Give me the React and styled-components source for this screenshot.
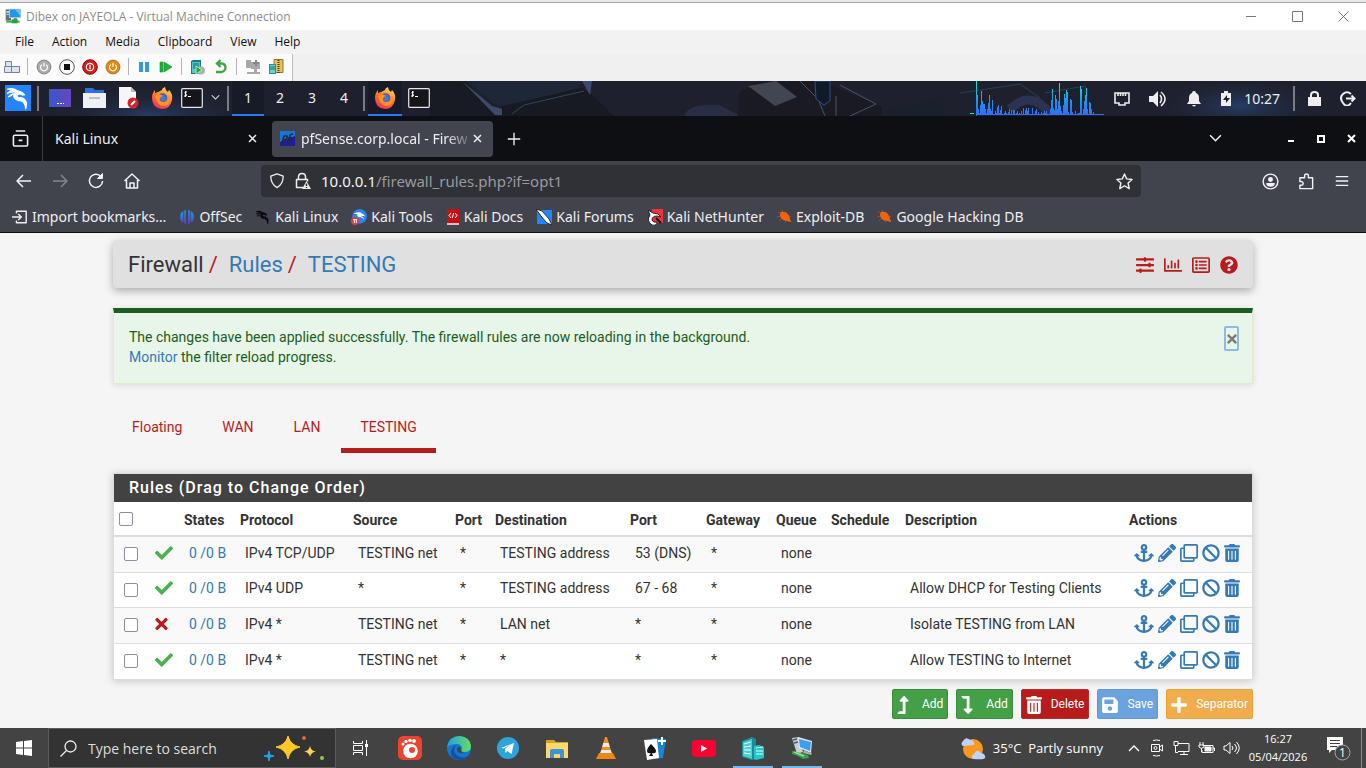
import React from "react";
import styled, { createGlobalStyle, css } from "styled-components";
import {
  FaAnchor,
  FaBan,
  FaCheck,
  FaLevelDownAlt,
  FaLevelUpAlt,
  FaPencilAlt,
  FaPlus,
  FaQuestionCircle,
  FaRegChartBar,
  FaRegClone,
  FaRegListAlt,
  FaSave,
  FaSlidersH,
  FaTimes,
  FaTrashAlt,
} from "react-icons/fa";

const GlobalStyle = createGlobalStyle`
  * {
    box-sizing: border-box;
  }
  body {
    margin: 0;
    background: #f5f5f5;
  }
  button, input {
    font: inherit;
    color: inherit;
  }
  button {
    padding: 0;
    border: 0;
    background: none;
  }
  a {
    color: inherit;
    text-decoration: none;
  }
  svg {
    display: block;
    flex: none;
  }
`;

const winFont = css`
  font-family: "Open Sans", "Noto Sans", sans-serif;
`;

const Screen = styled.div`
  display: flex;
  flex-direction: column;
  min-height: 100vh;
`;

/* ---------- virtual machine window ---------- */

const TitleBar = styled.header`
  ${winFont};
  display: flex;
  align-items: center;
  height: 30px;
  padding-left: 5px;
  border-top: 2px solid #e9e9e9;
  box-shadow: inset 0 1px #a5a5a5;
  background: #fff;
  color: #8c8c8c;
  font-size: 12px;
  gap: 5px;
`;

const WindowButtons = styled.div`
  display: flex;
  margin-left: auto;
`;

const WindowButton = styled.button`
  display: flex;
  align-items: center;
  justify-content: center;
  width: 46px;
  height: 26px;
  color: #777;
`;

const MenuBar = styled.nav`
  ${winFont};
  display: flex;
  align-items: center;
  height: 24px;
  padding: 0 0 2px 15px;
  gap: 18px;
  background: #f2f2f2;
  color: #111;
  font-size: 12px;
`;

const ToolStrip = styled.div`
  display: flex;
  height: 27px;
  background: #f0f0f0;
`;

const ToolGroup = styled.div`
  display: flex;
  align-items: center;
  padding: 0 8px 2px 4px;
  gap: 7px;
  background: #fbfbfb;
  border-right: 1px solid #bbb;
`;

const ToolDivider = styled.span`
  width: 2px;
  height: 17px;
  border-left: 1px solid #b5b5b5;
`;

/* ---------- kali panel ---------- */

const Panel = styled.div`
  position: relative;
  display: flex;
  align-items: center;
  height: 35px;
  background: #1e212d;
  color: #eee;
  font-family: "Noto Sans", sans-serif;
  font-size: 14px;
`;

const Wallpaper = styled.svg`
  position: absolute;
  inset: 0;
  width: 100%;
  height: 100%;
`;

const PanelGroup = styled.div`
  position: relative;
  display: flex;
  align-items: center;
  height: 100%;
  margin-left: ${(p) => (p.$end ? "auto" : 0)};
  gap: ${(p) => p.$gap || 0}px;
  padding: ${(p) => p.$pad || "0"};
`;

const PanelButton = styled.button`
  display: flex;
  align-items: center;
  justify-content: center;
  width: ${(p) => p.$width || 32}px;
  height: 100%;
  border-bottom: 2px solid ${(p) => (p.$active ? "#2777ff" : "transparent")};
  background: ${(p) => (p.$active ? "#171b27" : "none")};
`;

const PanelDivider = styled.span`
  width: 2px;
  height: 25px;
  margin: 0 ${(p) => p.$space || 0}px;
  background: #7b7d84;
`;

/* ---------- browser ---------- */

const TabStrip = styled.div`
  display: flex;
  align-items: center;
  height: 45px;
  background: #0e0f13;
  color: #eeeef0;
  font-family: "Noto Sans", sans-serif;
  font-size: 14px;
`;

const TabOverview = styled.button`
  display: flex;
  align-items: center;
  align-self: stretch;
  width: 43px;
  padding-left: 12px;
  border-right: 1px solid #3b3c42;
`;

const Tab = styled.div`
  display: flex;
  align-items: center;
  width: 221px;
  height: 36px;
  margin-left: 4px;
  padding: 0 11px 0 8px;
  gap: 6px;
  border-radius: 4px;
  background: ${(p) => (p.$active ? "#43454e" : "transparent")};
`;

const TabTitle = styled.span`
  flex: 1;
  white-space: nowrap;
  ${(p) =>
    p.$fade &&
    css`
      mask-image: linear-gradient(to right, #000 88%, transparent 104%);
    `}
`;

const TabClose = styled.button`
  display: flex;
`;

const IconButton = styled.button`
  display: flex;
  align-items: center;
  justify-content: center;
  width: ${(p) => p.$width || 36}px;
  height: 36px;
  color: ${(p) => (p.$dim ? "#84858b" : "#f2f2f4")};
`;

const NavBar = styled.div`
  display: flex;
  align-items: center;
  height: 40px;
  padding: 0 6px;
  background: #42444d;
`;

const UrlBox = styled.div`
  display: flex;
  align-items: center;
  flex: 1;
  height: 32px;
  margin: 0 111px;
  padding: 0 8px;
  gap: 9px;
  border-radius: 4px;
  background: #303136;
  color: #eee;
  font-family: "Noto Sans", sans-serif;
  font-size: 15px;
`;

const UrlText = styled.span`
  flex: 1;
  color: #9a9a9e;
  b {
    color: #f4f4f4;
    font-weight: 400;
  }
`;

const Bookmarks = styled.nav`
  display: flex;
  align-items: center;
  height: 32px;
  padding: 0 12px;
  gap: 13px;
  border-bottom: 1px solid #0e0f13;
  background: #42444d;
  color: #eeeef0;
  font-family: "Noto Sans", sans-serif;
  font-size: 14px;
`;

const Bookmark = styled.a`
  display: flex;
  align-items: center;
  gap: 4px;
  white-space: nowrap;
`;

/* ---------- firewall page ---------- */

const Page = styled.main`
  flex: 1;
  width: 100%;
  max-width: 1140px;
  margin: 0 auto;
  padding: 7px 0 9px;
  color: #333;
  font-family: Roboto, sans-serif;
  font-size: 14px;
  line-height: 20px;
`;

const PageHeader = styled.div`
  display: flex;
  align-items: center;
  height: 48px;
  padding: 2px 15px 0;
  border-radius: 4px;
  background: #e0e0e0;
  box-shadow: 0 3px 8px rgba(0, 0, 0, 0.3);
`;

const Breadcrumb = styled.h1`
  display: flex;
  margin: 0;
  gap: 5px;
  font-size: 22px;
  font-weight: 400;
  a {
    margin-left: 6px;
    color: #337ab7;
  }
  i {
    color: #c4161c;
    font-style: normal;
  }
`;

const HeaderLinks = styled.div`
  display: flex;
  margin-left: auto;
  gap: 10px;
  color: #b71c1c;
`;

const Alert = styled.div`
  display: flex;
  justify-content: space-between;
  align-items: flex-start;
  margin-top: 20px;
  padding: 13px 13px 16px 15px;
  border: 1px solid #dcedc8;
  border-top: 5px solid #1b5e20;
  background: #e8f5e9;
  color: #1b5e20;
  box-shadow: 0 1px 6px rgba(0, 0, 0, 0.12);
  p {
    margin: 1px 0 0;
  }
  a {
    color: #337ab7;
  }
`;

const AlertClose = styled.button`
  display: flex;
  align-items: center;
  justify-content: center;
  width: 15px;
  height: 25px;
  border: 2px solid #8db8e8;
  border-radius: 2px;
  color: #777f78;
`;

const TabList = styled.nav`
  display: flex;
  gap: 2px;
  margin-top: 23px;
`;

const TabLink = styled.a`
  height: 46px;
  padding: 10px 19px 0;
  border-bottom: 5px solid ${(p) => (p.$active ? "#b71c1c" : "transparent")};
  color: #b71c1c;
`;

const RulesPanel = styled.section`
  margin-top: 20px;
  border: 1px solid #ddd;
  background: #fff;
  box-shadow: 0 1px 8px rgba(0, 0, 0, 0.2);
`;

const RulesTitle = styled.h2`
  margin: 0;
  padding: 4px 15px;
  background: #424242;
  color: #fff;
  font-size: 16px;
  font-weight: 500;
  letter-spacing: 1px;
`;

const RulesTable = styled.table`
  width: 100%;
  table-layout: fixed;
  border-collapse: separate;
  border-spacing: 0;
`;

const Th = styled.th`
  width: ${(p) => (p.$width ? `${p.$width}px` : "auto")};
  height: 35px;
  padding: 2px 5px 0;
  border-bottom: 2px solid #ddd;
  font-weight: 700;
  text-align: left;
  white-space: nowrap;
`;

const Row = styled.tr`
  height: 35px;
  &:nth-child(odd) {
    height: 36px;
    background: #f9f9f9;
  }
  &:not(:last-child) td {
    border-bottom: 1px solid #ddd;
  }
`;

const Td = styled.td`
  padding: 0 0 4px 10px;
  white-space: nowrap;
  a {
    color: #337ab7;
  }
`;

const Tick = styled.input.attrs({ type: "checkbox" })`
  display: block;
  appearance: none;
  width: 14px;
  height: 14px;
  margin: ${(p) => (p.$head ? "0 0 2px" : "3px 0 0")};
  border: 1px solid #8f8f9d;
  border-radius: 2px;
  background: #fff;
`;

const Actions = styled.div`
  display: flex;
  gap: 4px;
`;

const AnchorIcon = styled(FaAnchor)`
  width: 20px;
`;

const TrashIcon = styled(FaTrashAlt)`
  width: 16px;
`;

const BlockIcon = styled(FaTimes)`
  width: 13px;
`;

const UpIcon = styled(FaLevelUpAlt)`
  width: 12px;
`;

const DownIcon = styled(FaLevelDownAlt)`
  width: 12px;
`;

const SaveIcon = styled(FaSave)`
  width: 16px;
`;

const PlusIcon = styled(FaPlus)`
  width: 16px;
`;

const ButtonRow = styled.div`
  display: flex;
  justify-content: flex-end;
  margin-top: 9px;
  gap: 8px;
`;

const tones = {
  green: ["#43a047", "#388e3c"],
  red: ["#b71c1c", "#c62828"],
  blue: ["#6ba3df", "#5c98d6"],
  orange: ["#f0ad4e", "#eea236"],
};

const ActionButton = styled.button`
  display: flex;
  align-items: center;
  height: 30px;
  padding: 0 4px;
  gap: 9px;
  border: 1px solid ${(p) => tones[p.$tone][1]};
  border-radius: 2px;
  background: ${(p) => tones[p.$tone][0]};
  color: #fff;
  font-size: 12px;
`;

const ButtonIcon = styled.span`
  width: 16px;
  padding-top: 2px;
`;

/* ---------- windows taskbar ---------- */

const TaskBar = styled.footer`
  ${winFont};
  display: flex;
  align-items: stretch;
  height: 40px;
  background: #434343;
  color: #fff;
  font-size: 13px;
`;

const StartButton = styled.button`
  display: flex;
  align-items: center;
  justify-content: center;
  width: 48px;
`;

const SearchBox = styled.label`
  display: flex;
  align-items: center;
  width: 288px;
  padding: 0 9px 0 11px;
  gap: 11px;
  border: 1px solid #5c5c5c;
  background: #333;
  input {
    flex: 1;
    min-width: 0;
    padding: 0;
    border: 0;
    background: none;
    font-size: 14px;
    &::placeholder {
      color: #ddd;
      opacity: 1;
    }
  }
`;

const TaskButton = styled.button`
  display: flex;
  align-items: center;
  justify-content: center;
  width: 49px;
  background: ${(p) => (p.$open ? "linear-gradient(#76b9ed, #76b9ed) bottom / 40px 2px no-repeat" : "none")};
`;

const TaskList = styled.div`
  display: flex;
`;

const Tray = styled.div`
  display: flex;
  align-items: center;
  margin-left: auto;
  gap: 8px;
`;

const Weather = styled.button`
  display: flex;
  align-items: center;
  margin-right: 17px;
  gap: 7px;
  white-space: pre;
`;

const Clock = styled.div`
  width: 60px;
  margin-right: 11px;
  font-size: 11px;
  line-height: 18px;
  text-align: center;
`;

const DesktopEdge = styled.span`
  width: 5px;
  height: 100%;
  margin-left: 2px;
  border-left: 1px solid #8a8a8a;
`;

const PcIcon = ({ size = 18 }) => (
  <svg width={size} height={size} viewBox="0 0 24 24">
    <path d="M1 2h8v17H1z" fill="#687177" />
    <path d="M2 5h5v2H2zm0 4h5v1H2z" fill="#e7eef1" />
    <path d="M6 1h18v14H6z" fill="#d3dadd" />
    <path d="M7 2h16v12H7z" fill="#2197e9" />
    <path d="M15 2h8v10z" fill="#6ac3fb" />
    <path d="M13 15h5v4h-5z" fill="#878d8e" />
    <path d="M2 19h20v3H2z" fill="#34b54a" />
    <path d="M10 17h9v6h-9z" fill="#26a33c" />
  </svg>
);

const VmTaskIcon = () => (
  <svg width="24" height="24" viewBox="0 0 24 24">
    <path d="M2 2l7-1 4 15-6 2z" fill="#c9ced1" />
    <path d="M3 4l4-1M4 7l4-1" stroke="#555" strokeWidth="1.500" />
    <path d="M8 1l14 4-1 12L9 12z" fill="#dfe8ee" />
    <path d="M9 3l12 3-1 9-10-4z" fill="#3a9fee" />
    <path d="M14 14l4 2 4 1-1 2-8-2z" fill="#a7adb0" />
    <path d="M2 15l9 2 7 2 1 3-6 1-5-3-6-2z" fill="#37a349" />
    <path d="M4 16l10 4" stroke="#9cdc91" strokeWidth="1.500" />
  </svg>
);

const PowerDot = ({ fill }) => (
  <svg width="16" height="16" viewBox="0 0 16 16">
    <circle cx="8" cy="8" r="7" fill={fill} stroke="#00000055" />
    <path d="M5.8 5.6a3.5 3.5 0 1 0 4.4 0M8 3.8v4" fill="none" stroke="#fff" strokeWidth="1.2" />
  </svg>
);

const Server = () => (
  <g>
    <path d="M1 2l2-1h8v14H1z" fill="#167b87" />
    <path d="M2 3h8v11H2z" fill="#54c6cc" />
    <path d="M3 5h6M3 7h6M3 9h6" stroke="#126b76" />
  </g>
);

const ToolIcons = () => (
  <>
    <svg width="16" height="16" viewBox="0 0 16 16" fill="#dce5ef" stroke="#74839b">
      <path d="M1.500 2.500h6v5h-6zM.5 7.500h7v6h-7zM7.500 7.500h8v6h-8z" />
    </svg>
    <ToolDivider />
    <PowerDot fill="#ababab" />
    <svg width="16" height="16" viewBox="0 0 16 16">
      <circle cx="8" cy="8" r="7.3" fill="#fff" stroke="#555" />
      <path d="M5 5h6v6H5z" fill="#111" />
    </svg>
    <svg width="16" height="16" viewBox="0 0 16 16">
      <circle cx="8" cy="8" r="7.3" fill="#dc1717" stroke="#8f0909" />
      <circle cx="8" cy="8" r="3.7" fill="none" stroke="#fff" strokeWidth="1.2" />
      <path d="M8 5.8v4.4" stroke="#fff" strokeWidth="1.3" />
    </svg>
    <PowerDot fill="#e78a0b" />
    <ToolDivider />
    <svg width="13" height="16" viewBox="0 0 13 16">
      <path d="M2 3h4v10H2zM8 3h4v10H8z" fill="#3598e7" />
    </svg>
    <svg width="17" height="16" viewBox="0 0 17 16">
      <path d="M3 3h3v10H3zM7 3l8 5-8 5z" fill="#20b33c" stroke="#148c2a" strokeWidth=".6" />
    </svg>
    <ToolDivider />
    <svg width="16" height="16" viewBox="0 0 16 16">
      <Server />
      <circle cx="11" cy="11.5" r="4" fill="#aab1b3" />
      <path d="M6 7l6 4-6 4z" fill="#1ead3a" stroke="#fff" strokeWidth=".6" />
    </svg>
    <svg width="16" height="16" viewBox="0 0 16 16" fill="none" stroke="#3fa640" strokeWidth="2.3">
      <path d="M3 13h5.500q4-1 4-4.500t-4-4H4M7.500 1L4 4.500 7.500 8" />
    </svg>
    <ToolDivider />
    <svg width="16" height="16" viewBox="0 0 16 16" fill="#a9a9a9">
      <path d="M1 1h5v8H1zM6 3h9v7H6zM9 10h3v3h3v2H2v-2h7z" />
      <path d="M11 1v6M8 4h6" stroke="#888" strokeWidth="2" />
    </svg>
    <svg width="16" height="16" viewBox="0 0 16 16">
      <path d="M6 .500h9v13H6z" fill="#e7c05a" stroke="#9b7823" />
      <path d="M10.500 1v13" stroke="#333" strokeWidth="2" strokeDasharray="1 1" />
      <path d="M1 5h7v10H1z" fill="#23939d" />
      <path d="M2 6h5v8H2z" fill="#67d2d5" />
      <path d="M2 8h5M2 10h5" stroke="#137581" />
    </svg>
  </>
);

const dragon =
  "M2 4q5-2 9 1l3 1q3 1 4 3l-2 .3q-1-1-3-1-3 1-1 3 5 0 7 3 2 3 0 8 0-6-4-7.500-6-.5-7-4 0-3 3-4-4-1-9 1 3-3 6-3-3-.5-6-.8zM3 11q3-3 5-3-2 2-5 3z";

const KaliLogo = ({ size = 26, bg = "#2385ff", color = "#fff" }) => (
  <svg width={size} height={size} viewBox="0 0 24 24">
    <path d="M0 0h24v24H0z" fill={bg} />
    <path d={dragon} fill={color} stroke={color} strokeWidth="1" />
  </svg>
);

const Firefox = () => (
  <svg width="22" height="22" viewBox="0 0 22 22">
    <defs>
      <linearGradient id="fox" x1=".8" y1="0" x2=".3" y2="1">
        <stop offset="0" stopColor="#ffe34a" />
        <stop offset=".5" stopColor="#ff7b24" />
        <stop offset="1" stopColor="#f02d62" />
      </linearGradient>
    </defs>
    <path d="M11 3q0-2 3-3 0 3 3 5l1-2q4 4 3 10-2 9-10 9Q1 21 1 11 1 6 4 3v3l3-1z" fill="url(#fox)" />
    <circle cx="11.500" cy="11" r="4.800" fill="#5a55cd" />
    <path d="M4 9q3-3 6-1l3 1-4 2q-1 4 4 4 5-1 4-7 4 6-1 10-9 4-12-9z" fill="#ff951e" />
    <circle cx="12" cy="11.500" r="2.600" fill="#3b7fd8" />
  </svg>
);

const Terminal = () => (
  <svg width="22" height="20" viewBox="0 0 22 20">
    <rect x=".7" y=".7" width="20.600" height="18.600" rx="1" fill="#14161a" stroke="#e8e8e8" strokeWidth="1.200" />
    <path d="M6 4H4.500q-1.500 1 0 1.800 2 .8.500 2.200H3M4.600 3v6M7 8.500h3" fill="none" stroke="#fff" />
  </svg>
);

const bars = [
  46, 20, 6, 2, 10, 24, 14, 11, 11, 6, 2, 6, 12, 20, 6, 4, 15, 1, 1, 4, 2, 8, 10, 2, 5, 9, 1, 1, 2, 4, 2, 1, 3, 6, 1,
  5, 1, 5, 5, 1, 2, 4, 1, 2, 1, 4, 1, 7, 1, 5, 7, 4, 7, 1, 1, 1, 7, 1, 1, 4, 6, 1, 3, 1, 1, 3, 1, 2, 4, 2, 4, 1, 1, 1,
  6, 15, 26, 7, 5, 20, 16, 6, 14, 32, 9, 4, 2, 10, 21, 17, 25, 23, 3, 1, 16, 15, 3, 1, 1, 4, 1, 1, 2, 2, 29, 26, 1, 6,
  14, 20, 27, 6, 1, 13, 12, 6, 1, 3, 1, 1,
];

const CpuGraph = () => (
  <svg width="134" height="35" viewBox="0 0 134 35">
    <defs>
      <linearGradient id="cpu" gradientUnits="userSpaceOnUse" x1="0" y1="0" x2="0" y2="34">
        <stop offset="0" stopColor="#14edda" />
        <stop offset=".65" stopColor="#1d8eef" />
        <stop offset="1" stopColor="#336dfb" />
      </linearGradient>
    </defs>
    <path d="M0 32h4v1H0z" fill="#13e5bd" />
    <g fill="url(#cpu)">
      {bars.map((h, i) => (
        <rect key={i} x={6 + i} y={34 - Math.min(h, 34)} width="1" height={h} />
      ))}
      <path d="M6 33h128v1H6z" />
    </g>
  </svg>
);

const Chevron = ({ size = 12, up }) => (
  <svg width={size} height={size} viewBox="0 0 12 12" fill="none" stroke="currentColor" strokeWidth="1.400">
    <path d={up ? "M1 9l5-5 5 5" : "M1 3l5 5 5-5"} />
  </svg>
);

const Cross = ({ size = 9 }) => (
  <svg width={size} height={size} viewBox="0 0 9 9" stroke="currentColor" strokeWidth="1.500">
    <path d="M1 1l7 7M8 1L1 8" />
  </svg>
);

const Line = ({ size = 18, width = 1.5, children }) => (
  <svg
    width={size}
    height={size}
    viewBox="0 0 18 18"
    fill="none"
    stroke="currentColor"
    strokeWidth={width}
    strokeLinejoin="round"
  >
    {children}
  </svg>
);

const ImportIcon = () => (
  <Line size={16} width={1.6}>
    <path d="M5 5V2.500h11v13H5V13M0 9h10M7 5.500L10.500 9 7 12.500" />
  </Line>
);

const OffsecIcon = () => (
  <svg width="16" height="16" viewBox="0 0 16 16">
    <defs>
      <linearGradient id="offsec" gradientUnits="userSpaceOnUse" x1="0" y1="0" x2="0" y2="16">
        <stop offset="0" stopColor="#13a4cf" />
        <stop offset="1" stopColor="#6336da" />
      </linearGradient>
    </defs>
    <g fill="url(#offsec)">
      <path d="M6.900 1v14.500l-1.700-1.500V1.500zM9.100 1v14.500l1.700-1.500V1.500z" />
      <path d="M4.400 2v11.500Q1 12.500 1 8t3.400-6zM11.600 2v11.500Q15 12.500 15 8t-3.400-6z" />
    </g>
  </svg>
);

const ToolsIcon = () => (
  <svg width="16" height="16" viewBox="0 0 24 24">
    <circle cx="13" cy="11" r="11" fill="#2b83f4" />
    <path d="M4 7q8-4 13 0 3 1 4 4l-6-1q4 2 5 7-3-5-8-5-4-1-2-4-3-1-6-1z" fill="#fff" />
    <circle cx="6" cy="18" r="6" fill="#e63b3d" />
    <path d="M3 16h6M5 16v5M8 16v5" stroke="#fff" strokeWidth="1.500" />
  </svg>
);

const DocsIcon = () => (
  <svg width="14" height="16" viewBox="0 0 14 16">
    <path d="M1 0h12v16H1z" fill="#c90e14" />
    <path d="M1 14h12v2H1z" fill="#e6bcbc" />
    <path d="M5 4L3 6.500 5 9M9 4l2 2.500L9 9M7.600 4l-1.200 5" fill="none" stroke="#fff" />
  </svg>
);

const ForumsIcon = () => (
  <svg width="16" height="16" viewBox="0 0 16 16">
    <path d="M1 1h15v14H1z" fill="#2384f5" />
    <path d="M0 0l6 2 7 8 3 6-5-2-6-7z" fill="#fff" stroke="#101318" strokeWidth=".8" />
  </svg>
);

const HunterIcon = () => (
  <svg width="16" height="16" viewBox="0 0 16 16">
    <path d="M5 0h11v14H6z" fill="#ef333c" />
    <path d="M1 1l5 3 5 1 3 3-4-1q-5 0-5 4 1 3 5 2 0 4-5 3-6-4-2-10z" fill="#fff" stroke="#17171a" strokeWidth=".9" />
    <path d="M9 9l5 5" stroke="#17171a" strokeWidth="2" />
  </svg>
);

const ExploitIcon = () => (
  <svg width="15" height="15" viewBox="0 0 15 15" fill="#f0640f" stroke="#a4572a" strokeWidth=".8">
    <path d="M1 3l4 1M5 1l1 3M0 8l4-1M2 12l3-3M8 14l1-2M14 13l-2-3M14 7l-2 1" />
    <path d="M4 3q3-1 6 1 3 3 3 6l1 3-4-1q-4 0-6-3-2-3 0-6z" stroke="none" />
  </svg>
);

const bookmarks = [
  ["Import bookmarks…", ImportIcon],
  ["OffSec", OffsecIcon],
  ["Kali Linux", () => <KaliLogo size={16} bg="none" color="#09090b" />],
  ["Kali Tools", ToolsIcon],
  ["Kali Docs", DocsIcon],
  ["Kali Forums", ForumsIcon],
  ["Kali NetHunter", HunterIcon],
  ["Exploit-DB", ExploitIcon],
  ["Google Hacking DB", ExploitIcon],
];

const columns = [
  ["States", 56],
  ["Protocol", 113],
  ["Source", 102],
  ["Port", 40],
  ["Destination", 135],
  ["Port", 76],
  ["Gateway", 70],
  ["Queue", 55],
  ["Schedule", 74],
  ["Description", null],
  ["Actions", 128],
];

const rules = [
  { pass: true, cells: ["IPv4 TCP/UDP", "TESTING net", "*", "TESTING address", "53 (DNS)", "*", "none", "", ""] },
  {
    pass: true,
    cells: ["IPv4 UDP", "*", "*", "TESTING address", "67 - 68", "*", "none", "", "Allow DHCP for Testing Clients"],
  },
  { pass: false, cells: ["IPv4 *", "TESTING net", "*", "LAN net", "*", "*", "none", "", "Isolate TESTING from LAN"] },
  { pass: true, cells: ["IPv4 *", "TESTING net", "*", "*", "*", "*", "none", "", "Allow TESTING to Internet"] },
];

const actionIcons = [
  ["Anchor", AnchorIcon],
  ["Edit", FaPencilAlt],
  ["Copy", FaRegClone],
  ["Disable", FaBan],
  ["Remove", TrashIcon],
];

const pageButtons = [
  ["Add", "green", UpIcon],
  ["Add", "green", DownIcon],
  ["Delete", "red", TrashIcon],
  ["Save", "blue", SaveIcon],
  ["Separator", "orange", PlusIcon],
];

function VmWindow() {
  return (
    <>
      <TitleBar>
        <PcIcon size={16} />
        Dibex on JAYEOLA - Virtual Machine Connection
        <WindowButtons>
          <WindowButton aria-label="Minimize">
            <svg width="11" height="11" stroke="currentColor">
              <path d="M0 5.500h10" />
            </svg>
          </WindowButton>
          <WindowButton aria-label="Maximize">
            <svg width="11" height="11" fill="none" stroke="currentColor">
              <path d="M.5.500h10v10H.500z" />
            </svg>
          </WindowButton>
          <WindowButton aria-label="Close">
            <svg width="11" height="11" stroke="currentColor">
              <path d="M.5.500l10 10M10.500.500l-10 10" />
            </svg>
          </WindowButton>
        </WindowButtons>
      </TitleBar>
      <MenuBar>
        {["File", "Action", "Media", "Clipboard", "View", "Help"].map((item) => (
          <button key={item}>{item}</button>
        ))}
      </MenuBar>
      <ToolStrip>
        <ToolGroup>
          <ToolIcons />
        </ToolGroup>
      </ToolStrip>
    </>
  );
}

function KaliPanel() {
  return (
    <Panel>
      <Wallpaper viewBox="0 0 1366 35" preserveAspectRatio="none" aria-hidden="true">
        <defs>
          <radialGradient id="haze">
            <stop offset="0" stopColor="#263c66" />
            <stop offset="1" stopColor="#1e212d" stopOpacity="0" />
          </radialGradient>
        </defs>
        <ellipse cx="150" cy="35" rx="110" ry="30" fill="url(#haze)" />
        <ellipse cx="1240" cy="25" rx="90" ry="30" fill="url(#haze)" />
        <path d="M430 0h36l30 35h-66z" fill="#191b24" />
        <path d="M462 0l30 25 10 3v6h-7z" fill="#3d4c66" />
        <path d="M466 0h116l-4 7-70 18-12-1z" fill="#1e2738" />
        <path d="M502 25l80-18 14 10 18 18H502z" fill="#181a22" />
        <path d="M512 33l12-9 60-14" fill="none" stroke="#2f465e" />
        <path d="M582 0h10l-2 14z" fill="#3a4a74" />
        <path d="M684 35q5-13 35-11l22 11z" fill="#292e46" />
        <path d="M739 12l20-12h60l35 14 28 12v9H738z" fill="#1a1b22" />
        <path d="M748 5l28-5 21 16-22 9z" fill="#414651" />
        <path d="M800 0l18 18 7 17M850 35l26-12-36-19M836 15v20" fill="none" stroke="#46536a" />
        <path d="M815 0h15v20l-6 4-8-6z" fill="#111a2b" stroke="#324d86" />
        <path d="M885 28l60-12v19h-62z" fill="#1b202d" />
        <path d="M1010 28q22-20 40 5" fill="none" stroke="#2c3350" strokeWidth="9" />
        <path d="M960 12l60-9 20 14M1045 12l40-7v20" fill="none" stroke="#234454" />
      </Wallpaper>
      <PanelGroup $pad="0 0 0 2px">
        <PanelButton aria-label="Applications">
          <KaliLogo />
        </PanelButton>
        <PanelDivider $space={3} />
        <PanelButton $width={36} aria-label="Desktop">
          <svg width="22" height="18">
            <defs>
              <linearGradient id="desk">
                <stop stopColor="#3657cd" />
                <stop offset="1" stopColor="#6946bd" />
              </linearGradient>
            </defs>
            <path d="M0 0h22v18H0z" fill="url(#desk)" />
            <path d="M8 14h2v1H8zM11 14h2v1h-2zM14 14h1v1h-1z" fill="#fff" />
          </svg>
        </PanelButton>
        <PanelButton aria-label="Files">
          <svg width="23" height="20">
            <path d="M2 0h8l2 2h9v5H2z" fill="#2c6ee8" />
            <path d="M0 5h23v15H0z" fill="#eef0f3" />
            <path d="M6 9h11v2H6z" fill="#bdc1c7" />
          </svg>
        </PanelButton>
        <PanelButton $width={36} aria-label="Text editor">
          <svg width="21" height="22">
            <path d="M1 0h12l5 5v16H1z" fill="#f6f6f6" />
            <path d="M13 0l5 5h-5z" fill="#bbb" />
            <circle cx="15" cy="16" r="5.500" fill="#d6202c" />
            <path d="M13 18l4-4" stroke="#fff" strokeWidth="2" />
          </svg>
        </PanelButton>
        <PanelButton aria-label="Firefox">
          <Firefox />
        </PanelButton>
        <PanelButton $width={28} aria-label="Terminal">
          <Terminal />
        </PanelButton>
        <PanelButton $width={18} aria-label="More terminals">
          <Chevron size={9} />
        </PanelButton>
        <PanelDivider $space={3} />
        <PanelButton $active>1</PanelButton>
        <PanelButton>2</PanelButton>
        <PanelButton>3</PanelButton>
        <PanelButton>4</PanelButton>
        <PanelDivider $space={3} />
        <PanelButton $active $width={34} aria-label="Firefox window">
          <Firefox />
        </PanelButton>
        <PanelButton $width={34} aria-label="Terminal window">
          <Terminal />
        </PanelButton>
      </PanelGroup>
      <PanelGroup $end $pad="0 10px 0 0" $gap={19}>
        <PanelGroup $gap={10}>
          <CpuGraph />
          <svg width="16" height="14" viewBox="0 0 16 14" fill="none" stroke="#eee" strokeWidth="1.600">
            <path d="M1 1h14v10h-4v2H5v-2H1zM4 1v3M6.500 1v3M9 1v3M11.500 1v3" />
          </svg>
        </PanelGroup>
        <svg width="18" height="16" viewBox="0 0 18 16" fill="#eee">
          <path d="M0 5h4l5-5v16l-5-5H0z" />
          <path d="M11 4q3 4 0 8M12 1q8 7 0 14" fill="none" stroke="#eee" strokeWidth="1.600" />
        </svg>
        <svg width="16" height="16" viewBox="0 0 16 16" fill="#eee">
          <path d="M6 2q0-2 2-2t2 2q3 1 3 5v3l2 3H1l2-3V7q0-4 3-5zM6 14h4q-2 3-4 0z" />
        </svg>
        <PanelGroup $gap={13}>
          <svg width="10" height="15" viewBox="0 0 10 15">
            <path d="M0 2h3V0h4v2h3v13H0z" fill="#eee" />
            <path d="M6 4L2 9h3v3l4-5H6z" fill="#1e212d" />
          </svg>
          <span>10:27</span>
          <PanelDivider />
          <svg width="13" height="15" viewBox="0 0 13 15">
            <path d="M0 6h13v9H0z" fill="#eee" />
            <path d="M3 7V4q0-3 3.500-3T10 4v3" fill="none" stroke="#eee" strokeWidth="2" />
          </svg>
        </PanelGroup>
        <svg width="16" height="15" viewBox="0 0 16 15" fill="none" stroke="#eee" strokeWidth="2">
          <path d="M11 3Q7-.5 3 3T3 12t8 0M6 7.500h8M11.500 4.500l3 3-3 3" />
        </svg>
      </PanelGroup>
    </Panel>
  );
}

function Browser() {
  return (
    <>
      <TabStrip>
        <TabOverview aria-label="Recent browsing">
          <Line size={17} width={1.7}>
            <path d="M4 1h10M3 5.500h12q1.500 0 1.500 1.500v8.500q0 1.500-1.500 1.500H3q-1.500 0-1.500-1.500V7Q1.500 5.500 3 5.500zM7 11h4" />
          </Line>
        </TabOverview>
        <Tab>
          <TabTitle>Kali Linux</TabTitle>
          <TabClose aria-label="Close tab">
            <Cross />
          </TabClose>
        </Tab>
        <Tab $active>
          <svg width="15" height="15" viewBox="0 0 15 15">
            <path d="M0 0h15v15H0z" fill="#211d94" />
            <path d="M0 0h15v5L0 11z" fill="#1478d0" />
            <path d="M2 12l2-7h3q1 3-3 4M8 12l2-7q0-2 3-2M8 7h4" fill="none" stroke="#24274b" strokeWidth="1.600" />
          </svg>
          <TabTitle $fade>pfSense.corp.local - Firew</TabTitle>
          <TabClose aria-label="Close tab">
            <Cross />
          </TabClose>
        </Tab>
        <IconButton $width={42} aria-label="New tab">
          <Line size={16}>
            <path d="M9 2v14M2 9h14" />
          </Line>
        </IconButton>
        <PanelGroup $end>
          <IconButton aria-label="List tabs">
            <Chevron size={13} />
          </IconButton>
          <PanelGroup $gap={22} $pad="0 10px 0 54px">
            <svg width="8" height="9">
              <path d="M1 6h6v2H1z" fill="#fff" />
            </svg>
            <svg width="8" height="8">
              <path d="M1 1h6v6H1z" fill="none" stroke="#fff" strokeWidth="2" />
            </svg>
            <svg width="9" height="9" stroke="#fff" strokeWidth="2">
              <path d="M1 1l7 7M8 1L1 8" />
            </svg>
          </PanelGroup>
        </PanelGroup>
      </TabStrip>
      <NavBar>
        <IconButton aria-label="Back">
          <Line>
            <path d="M16 9H2M8 3L2 9l6 6" />
          </Line>
        </IconButton>
        <IconButton $dim aria-label="Forward">
          <Line>
            <path d="M2 9h14M10 3l6 6-6 6" />
          </Line>
        </IconButton>
        <IconButton aria-label="Reload">
          <Line>
            <path d="M14 4.500A6.600 6.600 0 1 0 15.600 9" />
            <path d="M15.500 1.500v5h-5z" fill="currentColor" strokeWidth="1" />
          </Line>
        </IconButton>
        <IconButton aria-label="Home">
          <Line>
            <path d="M1.500 9L9 2l7.500 7M3.500 8v8h11V8M7 16v-5h4v5" />
          </Line>
        </IconButton>
        <UrlBox>
          <Line size={16}>
            <path d="M9 1l7 2.500q0 9-7 13-7-4-7-13z" />
          </Line>
          <Line size={18}>
            <path d="M9 15.500H2.500V7.500h11v2M4.500 7.500V5q0-3.500 3.500-3.500T11.500 5v2.500" />
            <path d="M12.500 9l4.500 8H8z" fill="currentColor" stroke="none" />
            <path d="M12.500 11.500v2.500M12.500 15v1" stroke="#303136" />
          </Line>
          <UrlText>
            <b>10.0.0.1</b>/firewall_rules.php?if=opt1
          </UrlText>
          <Line size={17}>
            <path d="M9 1l2.300 5.200 5.700.6-4.200 3.800 1.200 5.900L9 13.500l-5 3 1.200-5.900L1 6.800l5.700-.6z" />
          </Line>
        </UrlBox>
        <IconButton aria-label="Account">
          <Line size={17}>
            <circle cx="9" cy="9" r="7.800" />
            <circle cx="9" cy="6.800" r="2.600" fill="currentColor" stroke="none" />
            <path d="M4.500 10.500h9q0 4-4.500 4t-4.500-4z" fill="currentColor" stroke="none" />
          </Line>
        </IconButton>
        <IconButton aria-label="Extensions">
          <Line size={17}>
            <path d="M2 5h5V3q0-2 2-2t2 2v2h4.500v11.500H2V13h1.500q2-.5 2-2t-2-2H2z" />
          </Line>
        </IconButton>
        <IconButton aria-label="Menu">
          <Line size={16}>
            <path d="M2 4h14M2 9h14M2 14h14" />
          </Line>
        </IconButton>
      </NavBar>
      <Bookmarks>
        {bookmarks.map(([label, Icon]) => (
          <Bookmark key={label} href="#">
            <Icon />
            {label}
          </Bookmark>
        ))}
      </Bookmarks>
    </>
  );
}

function FirewallPage() {
  return (
    <Page>
      <PageHeader>
        <Breadcrumb>
          Firewall<i>/</i>
          <a href="#rules">Rules</a>
          <i>/</i>
          <a href="#testing">TESTING</a>
        </Breadcrumb>
        <HeaderLinks>
          {[FaSlidersH, FaRegChartBar, FaRegListAlt, FaQuestionCircle].map((Icon, i) => (
            <a key={i} href="#">
              <Icon size={18} />
            </a>
          ))}
        </HeaderLinks>
      </PageHeader>
      <Alert>
        <p>
          The changes have been applied successfully. The firewall rules are now reloading in the background.
          <br />
          <a href="#monitor">Monitor</a> the filter reload progress.
        </p>
        <AlertClose aria-label="Dismiss">
          <FaTimes size={14} />
        </AlertClose>
      </Alert>
      <TabList>
        {["Floating", "WAN", "LAN", "TESTING"].map((name) => (
          <TabLink key={name} href="#" $active={name === "TESTING"}>
            {name}
          </TabLink>
        ))}
      </TabList>
      <RulesPanel>
        <RulesTitle>Rules (Drag to Change Order)</RulesTitle>
        <RulesTable>
          <thead>
            <tr>
              <Th $width={31}>
                <Tick $head aria-label="Select all rules" />
              </Th>
              <Th $width={34} />
              {columns.map(([name, width], i) => (
                <Th key={i} $width={width}>
                  {name}
                </Th>
              ))}
            </tr>
          </thead>
          <tbody>
            {rules.map((rule, i) => (
              <Row key={i}>
                <Td>
                  <Tick aria-label={`Select rule ${i + 1}`} />
                </Td>
                <Td>{rule.pass ? <FaCheck size={18} color="#4caf50" /> : <BlockIcon size={18} color="#b71c1c" />}</Td>
                <Td>
                  <a href="#states">0 /0 B</a>
                </Td>
                {rule.cells.map((cell, j) => (
                  <Td key={j}>{cell}</Td>
                ))}
                <Td>
                  <Actions>
                    {actionIcons.map(([label, Icon]) => (
                      <a key={label} href="#" aria-label={label}>
                        <Icon size={18} />
                      </a>
                    ))}
                  </Actions>
                </Td>
              </Row>
            ))}
          </tbody>
        </RulesTable>
      </RulesPanel>
      <ButtonRow>
        {pageButtons.map(([label, tone, Icon], i) => (
          <ActionButton key={i} $tone={tone}>
            <ButtonIcon>
              <Icon size={18} />
            </ButtonIcon>
            {label}
          </ActionButton>
        ))}
      </ButtonRow>
    </Page>
  );
}

const taskIcons = [
  {
    name: "Task view",
    icon: (
      <svg width="17" height="16" fill="none" stroke="#fff">
        <path d="M1.500 1v2.500h9V1M1.500 15v-2.500h9V15M1.500 5.500h9v5h-9zM14.500 0v16" />
        <path d="M13 4h3v3h-3z" fill="#fff" stroke="none" />
      </svg>
    ),
  },
  {
    name: "GOM Player",
    icon: (
      <svg width="24" height="24">
        <rect width="24" height="24" rx="5" fill="#ec432f" />
        <circle cx="12.500" cy="15" r="7.300" fill="#fff" />
        <circle cx="14" cy="14" r="3" fill="#ec432f" />
        <g fill="#fff">
          <circle cx="5" cy="8" r="1.500" />
          <circle cx="8" cy="5.500" r="1.700" />
          <circle cx="12" cy="4.500" r="1.800" />
          <circle cx="16" cy="5" r="1.900" />
        </g>
      </svg>
    ),
  },
  {
    name: "Edge",
    icon: (
      <svg width="24" height="24" viewBox="0 0 24 24">
        <defs>
          <linearGradient id="edge">
            <stop stopColor="#1da4df" />
            <stop offset="1" stopColor="#65dd63" />
          </linearGradient>
        </defs>
        <circle cx="12" cy="12" r="12" fill="#1277cf" />
        <path d="M0 11Q2 0 13 0q10 1 11 10 0 6-7 6-4 0-2-4-1-4-5-4-7 0-10 3z" fill="url(#edge)" />
        <path d="M9 9q-5 8 4 12 6 2 9-3-3 6-10 6Q3 23 4 15q1-4 5-6z" fill="#164f9f" />
        <path d="M14 12q-1 4 3 5-7 1-7-4 1-4 4-1z" fill="#434343" />
      </svg>
    ),
  },
  {
    name: "Telegram",
    icon: (
      <svg width="22" height="22">
        <circle cx="11" cy="11" r="11" fill="#2ca4dc" />
        <path d="M4 11l13-5-2.500 11-4-3-2 2-.5-4 6-5-7 4.500z" fill="#fff" />
      </svg>
    ),
  },
  {
    name: "File Explorer",
    icon: (
      <svg width="22" height="19">
        <path d="M0 1h8l2 2h12v6H0z" fill="#dca11c" />
        <path d="M0 4h22v15H0z" fill="#ffd76b" />
        <path d="M4 19v-7q0-2 2-2h10q2 0 2 2v7h-4v-4H8v4z" fill="#3b93d9" />
      </svg>
    ),
  },
  {
    name: "VLC",
    icon: (
      <svg width="20" height="22">
        <path d="M9 0h2l5 17H4z" fill="#f58d17" />
        <path d="M7.300 6h5.400l1 4H6.300zM5.300 13h9.400l1 3H4.300z" fill="#eee" />
        <path d="M3 16h14l3 6H0z" fill="#f18613" />
      </svg>
    ),
  },
  {
    name: "Solitaire",
    icon: (
      <svg width="22" height="23">
        <path d="M8 1l14 1-3 19-9 1z" fill="#1686d5" />
        <path d="M0 3l13-1 2 19-12 2z" fill="#fff" />
        <path d="M7 7q5 5 5 7 0 3-4 2l1 3H5l2-3q-4 1-4-2 0-3 4-7z" fill="#111" />
        <path d="M18 0v8M14 4h8" stroke="#fff" strokeWidth="2" />
      </svg>
    ),
  },
  {
    name: "YouTube",
    icon: (
      <svg width="24" height="17">
        <rect width="24" height="17" rx="4" fill="#ff0033" />
        <path d="M9 5l6 3.500L9 12z" fill="#fff" />
      </svg>
    ),
  },
  {
    name: "Hyper-V Manager",
    open: true,
    icon: (
      <svg width="22" height="23">
        <path d="M0 4l10-4 4 2v20l-4 1-10-3z" fill="#178e99" />
        <path d="M1 5l9-3v20l-9-3z" fill="#43d3d7" />
        <path d="M2 7l7-2M2 10l7-1M2 13h7M2 16l7 1" stroke="#fff" />
        <path d="M12 9l5-1 5 2v11l-8 2-2-1z" fill="#22c6cd" />
        <path d="M14 11l7-1M14 14h7M14 17h7" stroke="#dff" />
      </svg>
    ),
  },
  { name: "Virtual Machine Connection", open: true, icon: <VmTaskIcon /> },
];

function WindowsTaskbar() {
  return (
    <TaskBar>
      <StartButton aria-label="Start">
        <svg width="16" height="16" fill="#fff">
          <path d="M0 2l7-1v6.500H0zM8 1l8-1v7.500H8zM0 8.500h7V15l-7-1zM8 8.500h8V16l-8-1z" />
        </svg>
      </StartButton>
      <SearchBox>
        <svg width="17" height="17" fill="none" stroke="#eee" strokeWidth="1.300">
          <circle cx="10.500" cy="6.500" r="5.500" />
          <path d="M6.500 10.500L.5 16.500" />
        </svg>
        <input type="text" aria-label="Search" placeholder="Type here to search" />
        <svg width="62" height="26">
          <path d="M24 1q2 9 12 11-10 2-12 12-2-10-12-12 10-2 12-11z" fill="#ffc928" stroke="#ffc928" strokeLinejoin="round" />
          <path d="M46 11q1 5 6 5.500-5 .5-6 5.500-1-5-6-5.500 5-.5 6-5.500z" fill="#ffd34c" />
          <path d="M5 16l1 4 4 1-4 1-1 4-1-4-4-1 4-1z" fill="#20a5ef" stroke="#20a5ef" />
          <circle cx="40" cy="3" r="2" fill="#ec6330" />
          <circle cx="58" cy="23" r="2" fill="#8bce45" />
        </svg>
      </SearchBox>
      <TaskList>
        {taskIcons.map(({ name, icon, open }) => (
          <TaskButton key={name} aria-label={name} $open={open}>
            {icon}
          </TaskButton>
        ))}
      </TaskList>
      <Tray>
        <Weather>
          <svg width="25" height="23">
            <circle cx="12" cy="12" r="10" fill="#f7991e" />
            <path d="M2 9Q-1 7 2 4q3-5 7-1 5 0 4 5zM12 22q-3-3 1-5 3-6 7-1 5 1 4 5-1 2-12 1z" fill="#bfd3fa" />
          </svg>
          <span>35°C  Partly sunny</span>
        </Weather>
        <Chevron up />
        <svg width="17" height="18" fill="none" stroke="#fff">
          <path d="M5 1.500q3.500-1 7 0M5 16.500q3.500 1 7 0M3.500 5.500h8v7h-8zM11.500 8l3-2v6l-3-2" />
          <circle cx="7.500" cy="9" r="1.500" />
        </svg>
        <svg width="17" height="16" fill="none" stroke="#fff">
          <path d="M5 3.500h11v8H5M1 1.500h4v4H1zM2.500 5.500v7H5M11 12v3M7 14.500h8" />
        </svg>
        <svg width="17" height="14" fill="none" stroke="#fff">
          <path d="M5 4.500h10v7H4V9M15 7h1.500v3M2 1v3M5 1v3M1 4h5v2q-3 3-5 0zM3.500 7v4" />
          <path d="M7 6h6v4H7z" fill="#fff" />
        </svg>
        <svg width="17" height="14" fill="none" stroke="#fff">
          <path d="M1 5h2l4-3.500v11L3 9H1zM9 5q2 2 0 4M11.500 3q4 4 0 8M13.500 1q5.500 6 0 12" />
        </svg>
        <Clock>
          16:27
          <br />
          05/04/2026
        </Clock>
        <svg width="24" height="26" viewBox="0 0 24 26">
          <path d="M0 2h16v13H5l-3 3v-3H0z" fill="#fff" />
          <path d="M3 5.500h10M3 8.500h10M3 11.500h7" stroke="#434343" />
          <circle cx="15.500" cy="17.500" r="7.500" fill="#434343" stroke="#aaa" />
          <text x="15.500" y="22" fill="#fff" fontSize="12" textAnchor="middle">
            1
          </text>
        </svg>
        <DesktopEdge />
      </Tray>
    </TaskBar>
  );
}

function App() {
  return (
    <>
      <GlobalStyle />
      <Screen>
        <VmWindow />
        <KaliPanel />
        <Browser />
        <FirewallPage />
        <WindowsTaskbar />
      </Screen>
    </>
  );
}

export default App;
